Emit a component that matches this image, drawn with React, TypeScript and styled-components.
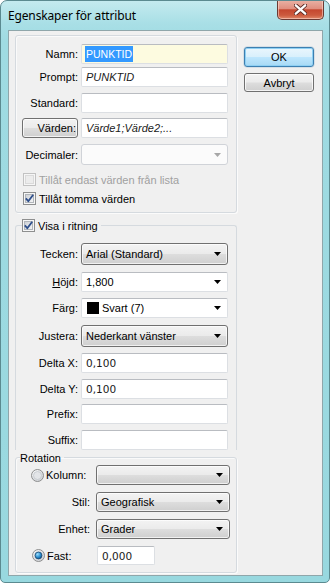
import React from "react";
import styled, { createGlobalStyle, css } from "styled-components";

const Global = createGlobalStyle`
  html, body { margin: 0; padding: 0; background: #ffffff; }
  body { font-family: "Liberation Sans", Arial, sans-serif; font-size: 11px; color: #000; }
  * { box-sizing: border-box; }
`;

const Window = styled.div`
  width: 330px;
  height: 583px;
  border: 1px solid #5b8a90;
  border-radius: 7px 7px 5px 5px;
  background: linear-gradient(180deg, #c4eaef 0px, #a9dfe6 22px, #9fdbe2 40px, #98d8df 100%);
  padding: 0 6px 6px 7px;
  display: flex;
  flex-direction: column;
  overflow: hidden;
`;

const TitleBar = styled.div`
  height: 29px;
  flex-shrink: 0;
  display: flex;
  align-items: flex-start;
  justify-content: space-between;
`;

const TitleText = styled.div`
  font-family: "Noto Sans", "Open Sans", sans-serif;
  font-size: 12px;
  color: #000;
  margin-top: 6px;
  letter-spacing: -0.15px;
`;

const CloseButton = styled.div`
  width: 47px;
  height: 20px;
  margin-top: -1px;
  margin-right: -1px;
  border: 1px solid #6a3a33;
  border-top: none;
  border-radius: 0 0 5px 5px;
  background: linear-gradient(180deg, #eab3a6 0%, #e08f7f 45%, #c5472f 52%, #cc5a3e 80%, #e0896a 100%);
  box-shadow: inset 0 0 0 1px rgba(255, 220, 210, 0.55);
  display: flex;
  align-items: center;
  justify-content: center;
`;

const Client = styled.div`
  flex: 1;
  min-height: 0;
  border: 1px solid #8fa6aa;
  background: #f0f0f0;
  display: flex;
  padding: 4px 0 0 6px;
  gap: 7px;
`;

const LeftCol = styled.div`
  width: 222px;
  display: flex;
  flex-direction: column;
`;

const RightCol = styled.div`
  display: flex;
  flex-direction: column;
  gap: 6px;
  padding-top: 12px;
`;

const groupBorder = css`
  border: 1px solid #d5dadf;
  border-radius: 3px;
  box-shadow: inset 1px 1px 0 #fafafa, 1px 1px 0 #fbfbfb;
`;

const Group = styled.div`
  ${groupBorder};
  height: 178px;
  flex-shrink: 0;
  padding: 8px 0 0 0;
  display: flex;
  flex-direction: column;
`;

const FieldSet = styled.fieldset<{ $open?: boolean; $h: number; $mt?: number }>`
  ${groupBorder};
  margin: ${(p) => p.$mt ?? 0}px 0 0 0;
  min-width: 0;
  flex-shrink: 0;
  height: ${(p) => p.$h}px;
  padding: 0;
  ${(p) => p.$open && css`border-bottom: none; border-radius: 3px 3px 0 0; box-shadow: none;`}
`;

const Legend = styled.legend<{ $ml: number }>`
  margin-left: ${(p) => p.$ml}px;
  padding: 0 3px 0 0;
  height: 15px;
  display: flex;
  align-items: center;
  gap: 3px;
`;

const Rows = styled.div<{ $pt: number }>`
  display: flex;
  flex-direction: column;
  padding-top: ${(p) => p.$pt}px;
`;

const FormRow = styled.div<{ $label?: number; $gap?: number; $mt?: number; $pr?: number }>`
  display: grid;
  grid-template-columns: ${(p) => p.$label ?? 62}px 1fr;
  column-gap: ${(p) => p.$gap ?? 3}px;
  align-items: center;
  margin-top: ${(p) => p.$mt ?? 0}px;
  padding-right: ${(p) => p.$pr ?? 8}px;
`;

const Label = styled.label<{ $pr?: number }>`
  text-align: right;
  padding-right: ${(p) => p.$pr ?? 0}px;
  white-space: nowrap;
`;

const ButtonCell = styled.div`
  display: flex;
  justify-content: flex-end;
`;

const TextBox = styled.div<{ $bg?: string; $w?: number; $h?: number; $italic?: boolean; $mono?: boolean }>`
  height: ${(p) => p.$h ?? 20}px;
  width: ${(p) => (p.$w ? `${p.$w}px` : "auto")};
  background: ${(p) => p.$bg ?? "#fff"};
  border: 1px solid #dcdfe3;
  border-top-color: #b9bcc1;
  border-radius: 2px;
  display: flex;
  align-items: center;
  padding-left: 4px;
  font-style: ${(p) => (p.$italic ? "italic" : "normal")};
  font-family: ${(p) => (p.$mono ? '"DejaVu Sans", Verdana, sans-serif' : "inherit")};
  font-size: ${(p) => (p.$mono ? "10.5px" : "11px")};
  color: #1a1a1a;
  white-space: nowrap;
  overflow: hidden;
`;

const Selected = styled.span`
  background: #3399ff;
  color: #fff;
  height: 16px;
  display: flex;
  align-items: center;
  padding: 0 1px;
  margin-left: -1px;
  font-size: 10.5px;
`;

const Combo = styled.div<{ $variant: "list" | "edit" | "disabled"; $h?: number }>`
  height: ${(p) => p.$h ?? 20}px;
  border-radius: 3px;
  display: flex;
  align-items: center;
  justify-content: space-between;
  padding: 0 6px 0 4px;
  white-space: nowrap;
  ${(p) =>
    p.$variant === "list"
      ? css`
          border: 1px solid #707070;
          background: linear-gradient(180deg, #f3f3f3 0%, #ebebeb 48%, #dddddd 52%, #cfcfcf 100%);
          box-shadow: inset 0 0 0 1px rgba(255, 255, 255, 0.7);
        `
      : p.$variant === "edit"
      ? css`
          border: 1px solid #dcdfe3;
          border-top-color: #b9bcc1;
          border-radius: 2px;
          background: #fff;
        `
      : css`
          border: 1px solid #d0d3d8;
          background: #fbfbfb;
        `}
`;

const ComboText = styled.span`
  display: flex;
  align-items: center;
  gap: 3px;
`;

const Swatch = styled.span`
  width: 12px;
  height: 12px;
  background: #000;
  display: inline-block;
  margin-left: 1px;
`;

const PushButton = styled.div<{ $default?: boolean; $w?: number; $h?: number; $align?: string }>`
  width: ${(p) => p.$w ?? 70}px;
  height: ${(p) => p.$h ?? 20}px;
  border-radius: 3px;
  display: flex;
  align-items: center;
  justify-content: ${(p) => p.$align ?? "center"};
  padding: 0 1px;
  white-space: nowrap;
  ${(p) =>
    p.$default
      ? css`
          border: 1px solid #3c7fb1;
          background: linear-gradient(180deg, #eaf6fd 0%, #d9f0fc 48%, #bee6fd 52%, #a7d9f5 100%);
          box-shadow: inset 0 0 0 1px #8fd0f3, 0 0 0 0.5px rgba(60, 127, 177, 0.3);
        `
      : css`
          border: 1px solid #707070;
          background: linear-gradient(180deg, #f2f2f2 0%, #ebebeb 48%, #dddddd 52%, #cfcfcf 100%);
          box-shadow: inset 0 0 0 1px rgba(255, 255, 255, 0.75);
        `}
`;

const CheckRow = styled.div<{ $disabled?: boolean }>`
  height: 19px;
  display: flex;
  align-items: center;
  gap: 3px;
  padding-left: 7px;
  color: ${(p) => (p.$disabled ? "#a0a0a0" : "#000")};
`;

const CheckArea = styled.div`
  margin-top: 5px;
  display: flex;
  flex-direction: column;
`;

const RadioLabel = styled.div<{ $pl: number }>`
  display: flex;
  align-items: center;
  gap: 2px;
  padding-left: ${(p) => p.$pl}px;
  white-space: nowrap;
`;

const Underline = styled.span`
  text-decoration: underline;
  text-underline-offset: 1px;
`;

const Arrow = ({ color = "#000" }: { color?: string }) => (
  <svg width="7" height="4" viewBox="0 0 7 4">
    <polygon points="0,0 7,0 3.5,4" fill={color} />
  </svg>
);

const CheckBox = ({ checked, disabled }: { checked?: boolean; disabled?: boolean }) => (
  <svg width="13" height="13" viewBox="0 0 13 13">
    <defs>
      <linearGradient id="cbInner" x1="0" y1="0" x2="1" y2="1">
        <stop offset="0" stopColor="#cbcfd5" />
        <stop offset="1" stopColor="#f6f6f6" />
      </linearGradient>
    </defs>
    <rect x="0.5" y="0.5" width="12" height="12" fill="#f6f6f6" stroke={disabled ? "#c2c2c2" : "#8e8f8f"} />
    <rect
      x="2.5"
      y="2.5"
      width="8"
      height="8"
      fill={disabled ? "#ececec" : "url(#cbInner)"}
      stroke={disabled ? "#dadada" : "#b1b5ba"}
    />
    {checked && (
      <path d="M2.8 6.3 L5.3 9.2 L10.2 2.8" fill="none" stroke="#2f4f8b" strokeWidth="1.8" strokeLinejoin="round" />
    )}
  </svg>
);

const Radio = ({ checked }: { checked?: boolean }) => (
  <svg width="13" height="13" viewBox="0 0 13 13">
    <defs>
      <radialGradient id="rOuter" cx="0.35" cy="0.3" r="0.8">
        <stop offset="0" stopColor="#ffffff" />
        <stop offset="1" stopColor="#c9ccd1" />
      </radialGradient>
      <radialGradient id="rDot" cx="0.35" cy="0.3" r="0.75">
        <stop offset="0" stopColor="#9ee0ff" />
        <stop offset="0.6" stopColor="#2b8fd0" />
        <stop offset="1" stopColor="#0e4f86" />
      </radialGradient>
    </defs>
    <circle cx="6.5" cy="6.5" r="6" fill="url(#rOuter)" stroke="#8e8f8f" />
    <circle cx="6.5" cy="6.5" r="4" fill="#e3e5e8" stroke="#c2c6cb" strokeWidth="0.8" />
    {checked && <circle cx="6.5" cy="6.5" r="3.4" fill="url(#rDot)" stroke="#1d4a73" strokeWidth="0.8" />}
  </svg>
);

const CloseGlyph = () => (
  <svg width="13" height="11" viewBox="0 0 13 11">
    <path d="M1.5 1 L11.5 10 M11.5 1 L1.5 10" stroke="#5b2a24" strokeWidth="4" strokeLinecap="round" />
    <path d="M1.8 1.3 L11.2 9.7 M11.2 1.3 L1.8 9.7" stroke="#ffffff" strokeWidth="2.3" strokeLinecap="round" />
  </svg>
);

export default function App() {
  return (
    <>
      <Global />
      <Window>
        <TitleBar>
          <TitleText>Egenskaper för attribut</TitleText>
          <CloseButton>
            <CloseGlyph />
          </CloseButton>
        </TitleBar>
        <Client>
          <LeftCol>
            <Group>
              <Rows $pt={0}>
                <FormRow>
                  <Label>Namn:</Label>
                  <TextBox $bg="#fdfbe0">
                    <Selected>PUNKTID</Selected>
                  </TextBox>
                </FormRow>
                <FormRow $mt={3}>
                  <Label>Prompt:</Label>
                  <TextBox $italic>PUNKTID</TextBox>
                </FormRow>
                <FormRow $mt={6}>
                  <Label>Standard:</Label>
                  <TextBox />
                </FormRow>
                <FormRow $mt={5}>
                  <ButtonCell>
                    <PushButton $w={56} $h={20} $align="flex-end">
                      Värden:
                    </PushButton>
                  </ButtonCell>
                  <TextBox $italic>Värde1;Värde2;...</TextBox>
                </FormRow>
                <FormRow $mt={6}>
                  <Label>Decimaler:</Label>
                  <Combo $variant="disabled" $h={21}>
                    <span />
                    <Arrow color="#a7a7a7" />
                  </Combo>
                </FormRow>
              </Rows>
              <CheckArea>
                <CheckRow $disabled>
                  <CheckBox disabled />
                  Tillåt endast värden från lista
                </CheckRow>
                <CheckRow>
                  <CheckBox checked />
                  Tillåt tomma värden
                </CheckRow>
              </CheckArea>
            </Group>

            <FieldSet $open $h={232} $mt={5}>
              <Legend $ml={6}>
                <CheckBox checked />
                Visa i ritning
              </Legend>
              <Rows $pt={10}>
                <FormRow>
                  <Label>Tecken:</Label>
                  <Combo $variant="list" $h={22}>
                    <ComboText>Arial (Standard)</ComboText>
                    <Arrow />
                  </Combo>
                </FormRow>
                <FormRow $mt={7}>
                  <Label>
                    <Underline>H</Underline>öjd:
                  </Label>
                  <Combo $variant="edit">
                    <ComboText>1,800</ComboText>
                    <Arrow />
                  </Combo>
                </FormRow>
                <FormRow $mt={6}>
                  <Label>Färg:</Label>
                  <Combo $variant="edit">
                    <ComboText>
                      <Swatch />
                      Svart (7)
                    </ComboText>
                    <Arrow />
                  </Combo>
                </FormRow>
                <FormRow $mt={7}>
                  <Label>Justera:</Label>
                  <Combo $variant="list" $h={22}>
                    <ComboText>Nederkant vänster</ComboText>
                    <Arrow />
                  </Combo>
                </FormRow>
                <FormRow $mt={6}>
                  <Label>Delta X:</Label>
                  <TextBox $mono>0,100</TextBox>
                </FormRow>
                <FormRow $mt={6}>
                  <Label>Delta Y:</Label>
                  <TextBox $mono>0,100</TextBox>
                </FormRow>
                <FormRow $mt={5}>
                  <Label>Prefix:</Label>
                  <TextBox />
                </FormRow>
                <FormRow $mt={6}>
                  <Label>Suffix:</Label>
                  <TextBox />
                </FormRow>
              </Rows>
            </FieldSet>

            <FieldSet $h={123}>
              <Legend $ml={4}>Rotation</Legend>
              <Rows $pt={0}>
                <FormRow $label={80} $gap={0} $pr={6}>
                  <RadioLabel $pl={15}>
                    <Radio />
                    Kolumn:
                  </RadioLabel>
                  <Combo $variant="list">
                    <span />
                    <Arrow />
                  </Combo>
                </FormRow>
                <FormRow $label={80} $gap={0} $pr={6} $mt={7}>
                  <Label $pr={6}>Stil:</Label>
                  <Combo $variant="list">
                    <ComboText>Geografisk</ComboText>
                    <Arrow />
                  </Combo>
                </FormRow>
                <FormRow $label={80} $gap={0} $pr={6} $mt={7}>
                  <Label $pr={6}>Enhet:</Label>
                  <Combo $variant="list">
                    <ComboText>Grader</ComboText>
                    <Arrow />
                  </Combo>
                </FormRow>
                <FormRow $label={81} $gap={0} $mt={7}>
                  <RadioLabel $pl={16}>
                    <Radio checked />
                    Fast:
                  </RadioLabel>
                  <TextBox $w={58} $h={19} $mono>
                    0,000
                  </TextBox>
                </FormRow>
              </Rows>
            </FieldSet>
          </LeftCol>
          <RightCol>
            <PushButton $default>OK</PushButton>
            <PushButton $h={19}>Avbryt</PushButton>
          </RightCol>
        </Client>
      </Window>
    </>
  );
}
